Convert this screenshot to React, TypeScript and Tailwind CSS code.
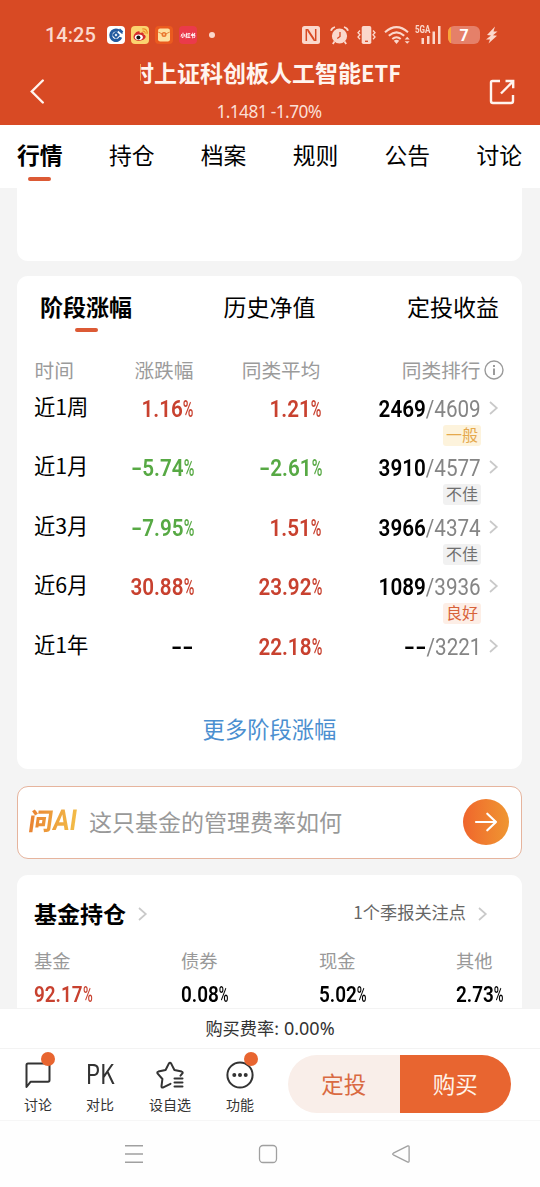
import React from 'react';

// Type for one line of the period performance table
type PeriodRow = {
  label: string;
  change: string;
  average: string;
  rank: string;
  total: string;
  tag?: { text: string; className: string };
};

const tabs = ['行情', '持仓', '档案', '规则', '公告', '讨论'];

const greyTag = 'bg-[#f1f1f1] text-[#6f6f6f]';

const rows: PeriodRow[] = [
  { label: '近1周', change: '1.16%', average: '1.21%', rank: '2469', total: '4609', tag: { text: '一般', className: 'bg-[#fdf3dc] text-[#e5a94c]' } },
  { label: '近1月', change: '-5.74%', average: '-2.61%', rank: '3910', total: '4577', tag: { text: '不佳', className: greyTag } },
  { label: '近3月', change: '-7.95%', average: '1.51%', rank: '3966', total: '4374', tag: { text: '不佳', className: greyTag } },
  { label: '近6月', change: '30.88%', average: '23.92%', rank: '1089', total: '3936', tag: { text: '良好', className: 'bg-[#fdeee6] text-[#d8623a]' } },
  { label: '近1年', change: '--', average: '22.18%', rank: '--', total: '3221' },
];

const holdings = [
  { label: '基金', value: '92.17%', width: 'w-[147px]', color: 'text-[#c8412f]' },
  { label: '债券', value: '0.08%', width: 'w-[138px]', color: 'text-black' },
  { label: '现金', value: '5.02%', width: 'w-[137px]', color: 'text-black' },
  { label: '其他', value: '2.73%', width: 'w-[60px]', color: 'text-black' },
];

const valueColor = (value: string) => {
  if (value === '--') return 'text-black';
  return value.startsWith('-') ? 'text-[#57a944]' : 'text-[#c8412f]';
};

// Digits keep their width, leading dashes are stretched to a full figure
const Digits = ({ value }: { value: string }) => {
  const dashes = value.match(/^-+/)?.[0] ?? '';
  return (
    <>
      {dashes && <span className="inline-block origin-right scale-x-[1.5]">{dashes}</span>}
      {value.slice(dashes.length)}
    </>
  );
};

// Condensed figure, the percent sign is drawn narrower than the digits
const Figure = ({ value, className }: { value: string; className: string }) => {
  const isPercent = value.endsWith('%');
  return (
    <span className={`inline-block scale-x-[.86] whitespace-nowrap font-['Roboto',sans-serif] font-semibold ${className}`}>
      <Digits value={isPercent ? value.slice(0, -1) : value} />
      {isPercent && <span className="-mr-[5px] inline-block origin-left scale-x-[.7] font-medium">%</span>}
    </span>
  );
};

const Chevron = () => (
  <svg width="10" height="14" viewBox="0 0 10 14" fill="none" stroke="#c9c9c9" strokeWidth="1.7">
    <path d="M1 1 7.8 7 1 13" />
  </svg>
);

const StatusBar = () => (
  <div className="flex h-[18px] items-center text-[#fbd8cc]">
    <span className="ml-[45px] w-[62px] font-['Roboto',sans-serif] text-[20px] font-medium leading-[18px]">14:25</span>
    <div className="flex gap-[6px]">
      <svg width="18" height="18" viewBox="0 0 18 18">
        <rect width="18" height="18" rx="4" fill="#fff" />
        <path d="M11.2 4.6A5.2 5.2 0 1 0 13.8 11.2" fill="none" stroke="#245b9f" strokeWidth="3" />
        <path d="M9 5 13 9 9 13 5 9Z" fill="#245b9f" />
        <path d="M7.6 9 9 7.6 10.4 9 9 10.4Z" fill="#fff" />
        <path d="M10.5 3.2 15.5 7.5M12.5 3 15.8 6" stroke="#245b9f" strokeWidth="1.5" />
      </svg>
      <svg width="18" height="18" viewBox="0 0 18 18">
        <rect width="18" height="18" rx="4" fill="#fbd470" />
        <path d="M2.5 11.3C2.5 8 6 4.8 8 5.2c1 .2.8 1.4.7 1.8 1.8-.8 4.6-.8 3.9 1.4 2 .5 2.6 2 1.6 3.6-2.2 3.8-11.7 3.7-11.7-.7Z" fill="#d52b2a" />
        <ellipse cx="7.8" cy="11.2" rx="4" ry="2.8" fill="#fff" />
        <circle cx="7.4" cy="11.4" r="2" fill="#151515" />
        <path d="M11.5 5.2C13.2 4.8 14.4 6 14.2 7.6M11.2 3C14.5 2.2 16.8 4.8 16 8" fill="none" stroke="#ef8d28" strokeWidth="1.1" />
      </svg>
      <svg width="18" height="18" viewBox="0 0 18 18">
        <rect width="18" height="18" rx="4" fill="#ea5a1f" />
        <rect x="3" y="2.5" width="12" height="13" rx="2.2" fill="#fde0a0" />
        <path d="M3.2 6 9 8.8 14.8 6" fill="none" stroke="#e8863a" strokeWidth="1" />
        <circle cx="9" cy="8.5" r="2.5" fill="#e9752c" />
        <path d="M9 7.2V9.8M8 8.3H10" stroke="#fde0a0" strokeWidth=".7" />
      </svg>
      <span className="flex h-[18px] w-[18px] items-center justify-center rounded bg-[#ea3a4b]">
        <span className="scale-[.5] whitespace-nowrap text-[10px] font-black leading-none text-white">小红书</span>
      </span>
    </div>
    <span className="ml-[12px] h-[6px] w-[6px] rounded-full bg-[#fbd8cc]" />

    <svg className="ml-[87px]" width="18" height="18" viewBox="0 0 18 18">
      <rect width="18" height="18" rx="2.5" fill="currentColor" />
      <path d="M4.3 15V3.8H5.8L12 13.2M13.7 3V14.2H12.2L6 4.8" fill="none" stroke="#d84a24" strokeWidth="1.5" />
    </svg>
    <svg className="ml-[10px]" width="19" height="19" viewBox="0 0 19 19" fill="none" stroke="currentColor">
      <circle cx="9.5" cy="10" r="7.6" fill="currentColor" stroke="none" />
      <path d="M1 4.8Q1.8 1.8 5 1M18 4.8Q17.2 1.8 14 1M4.5 15.5 2.8 18M14.5 15.5 16.2 18" strokeWidth="1.8" />
      <path d="M10 6V10.5L7.3 12.5" stroke="#d84a24" strokeWidth="1.3" />
    </svg>
    <svg className="ml-[8px]" width="19" height="18" viewBox="0 0 19 18" fill="none" stroke="currentColor" strokeWidth="1.3">
      <rect x="4.7" y="0" width="9.6" height="18" rx="1.8" fill="currentColor" stroke="none" />
      <path d="M8 15.3H11" stroke="#d84a24" />
      <path d="M3 4.5 1 6.7 3 8.8 1 11 3 13.2M16 4.5 18 6.7 16 8.8 18 11 16 13.2" />
    </svg>
    <svg className="ml-[8px]" width="26" height="18" viewBox="0 0 26 18" fill="none" stroke="currentColor" strokeWidth="2">
      <path d="M1 6.2Q12.5-4 24 6.2M4.8 9.8Q12.5 3 20.2 9.8M8.3 13Q12.5 9.4 16.7 13" />
      <path d="M9.8 14.7Q12.5 12.6 15.2 14.7L12.5 18Z" fill="currentColor" stroke="none" />
      <path d="M20.7 13.4 23.2 10.8 25.7 13.4ZM20.7 15.2 23.2 17.8 25.7 15.2Z" fill="currentColor" stroke="none" />
    </svg>
    <div className="relative ml-[6px] h-[18px] w-[25px]">
      <svg width="25" height="18" viewBox="0 0 25 18" fill="currentColor">
        <path d="M5.5 12H8V18H5.5ZM11 10H13.5V18H11ZM16.5 5.5H19V18H16.5ZM22 0H24.5V18H22Z" />
      </svg>
      <span className="absolute -left-[1px] -top-[1px] origin-left scale-x-[.8] font-['Roboto',sans-serif] text-[10px] font-bold leading-[10px]">5GA</span>
    </div>
    <div className="ml-[7px] flex h-[18px] w-[32px] overflow-hidden rounded-[6px] bg-[#e58069]">
      <span className="w-[3px] bg-[#f9a63a]" />
      <span className="flex-1 pr-[3px] text-center font-['Roboto',sans-serif] text-[16px] font-bold leading-[19px] text-white">7</span>
    </div>
    <svg className="ml-[6px]" width="12" height="18" viewBox="0 0 12 18" fill="currentColor">
      <path d="M9 .5 1 9 5 9.5 0 13.5 4 13.5 2.5 17.5 11 9.8 7 9.2 11.5 5.5 7.5 5.5Z" />
    </svg>
  </div>
);

const Header = () => (
  <header className="h-[125px] bg-[#d84a24] pt-[26px]">
    <StatusBar />
    <div className="mt-[14px] flex h-[67px] text-[#fff4ee]">
      <div className="w-[140px] pl-[30px] pt-[21px]">
        <svg width="15" height="25" viewBox="0 0 15 25" fill="none" stroke="currentColor" strokeWidth="2.4" strokeLinecap="round">
          <path d="M12.8 1.5 1.8 12.5 12.8 23.5" />
        </svg>
      </div>
      <div className="w-[260px]">
        {/* marquee title, scrolled under the left edge */}
        <div className="flex h-[31px] overflow-hidden">
          <h1 className="-ml-[32px] whitespace-nowrap text-[23px] font-bold leading-[29px]">
            博时上证科创板人工智能<span className="text-[22px]">ETF</span>
          </h1>
        </div>
        <p className="mt-[11px] pr-[2px] text-center font-['Noto_Sans',sans-serif] text-[17.3px] leading-[23px] tracking-[-.6px] text-[#fbdfd5]">1.1481 -1.70%</p>
      </div>
      <div className="pl-[89px] pt-[21px]">
        <svg width="26" height="26" viewBox="0 0 26 26" fill="none" stroke="currentColor" strokeWidth="2.4">
          <path d="M11 2H3.5Q2 2 2 3.5V22Q2 24 4 24H22Q24 24 24 22V16" />
          <path d="M12 14.5 24 2.3" />
          <path d="M16.5 2H24.2V9.2" />
        </svg>
      </div>
    </div>
  </header>
);

const Tabs = () => (
  <nav className="flex h-[63px] justify-between bg-white pl-[17px] pr-[18px]">
    {tabs.map((tab, i) => (
      <div key={tab} className="flex flex-col items-center">
        <span className={`h-[52px] whitespace-nowrap text-[22.8px] leading-[60px] ${i === 0 ? 'font-bold' : ''}`}>{tab}</span>
        {i === 0 && <span className="h-[4px] w-[23px] rounded-full bg-[#dc5a35]" />}
      </div>
    ))}
  </nav>
);

const Performance = () => (
  <section className="mt-[15px] h-[493px] rounded-[11px] bg-white">
    <div className="flex h-[72px] justify-between pl-[23px] pr-[23px] text-[23px] leading-[60px]">
      <div className="flex flex-col items-center">
        <span className="h-[52px] font-bold">阶段涨幅</span>
        <span className="h-[4px] w-[23px] rounded-full bg-[#dc5a35]" />
      </div>
      <span>历史净值</span>
      <span>定投收益</span>
    </div>
    <div className="grid h-[44px] grid-cols-[60px_99px_127px_160px_26px] items-center pl-[17.5px] text-[19.7px] leading-[44px] text-[#9b9b9b]">
      <span>时间</span>
      <span className="text-right">涨跌幅</span>
      <span className="text-right">同类平均</span>
      <span className="text-right">同类排行</span>
      <svg className="ml-[3px]" width="20" height="20" viewBox="0 0 20 20" fill="none" stroke="currentColor">
        <circle cx="10" cy="10" r="9" strokeWidth="1.4" />
        <path d="M10 8.5V15M10 5V7" strokeWidth="2" />
      </svg>
    </div>
    {rows.map(row => (
      <div key={row.label} className="h-[59.4px] pl-[17px]">
        <div className="grid h-[33px] grid-cols-[60px_100px_128px_159px_26px] items-start text-[24px] leading-[29px]">
          <span className="whitespace-nowrap text-[21.3px] leading-[28px]">{row.label}</span>
          <span className="text-right"><Figure value={row.change} className={`origin-right ${valueColor(row.change)}`} /></span>
          <span className="text-right"><Figure value={row.average} className={`origin-right ${valueColor(row.average)}`} /></span>
          <span className="text-right">
            <span className="inline-block origin-right scale-x-[.86] whitespace-nowrap font-['Roboto',sans-serif] font-semibold">
              <Digits value={row.rank} /><span className="font-normal text-[#858585]">/{row.total}</span>
            </span>
          </span>
          <span className="flex h-[32px] items-center pl-[7.5px]"><Chevron /></span>
        </div>
        {row.tag && (
          <div className="flex w-[447px] justify-end">
            <span className={`h-[21px] w-[38px] rounded-[3px] text-center text-[16px] leading-[19px] ${row.tag.className}`}>{row.tag.text}</span>
          </div>
        )}
      </div>
    ))}
    <p className="mt-[23px] text-center text-[22.3px] leading-[32px] text-[#4b8fd0]">更多阶段涨幅</p>
  </section>
);

const AskAi = () => (
  <section className="mt-[17px] flex h-[73px] items-center rounded-[11px] border border-[#e6b49d] bg-white pb-[2px] pl-[11px] pr-[12px]">
    <div className="flex w-[60px] -skew-x-[8deg] items-center pb-[3px]">
      <span className="bg-gradient-to-r from-[#e98232] to-[#eda03d] bg-clip-text text-[24px] font-black leading-[34px] text-transparent">问</span>
      <span className="origin-left scale-x-[.86] bg-gradient-to-r from-[#eda03d] to-[#f3bd48] bg-clip-text font-['Roboto',sans-serif] text-[29px] font-bold leading-[34px] text-transparent">AI</span>
    </div>
    <span className="flex-1 pb-[2px] text-[23px] leading-[34px] text-[#999]">这只基金的管理费率如何</span>
    <span className="flex h-[46px] w-[46px] items-center justify-center rounded-full bg-gradient-to-r from-[#ef652c] to-[#ef9632]">
      <svg width="24" height="20" viewBox="0 0 24 20" fill="none" stroke="#fff" strokeWidth="2.2" strokeLinecap="round" strokeLinejoin="round">
        <path d="M2 10H22M13.3 1.7 22 10 13.3 18.3" />
      </svg>
    </span>
  </section>
);

const Holdings = () => (
  <section className="mt-[16px] h-[133px] rounded-t-[11px] bg-white pl-[17px]">
    <div className="flex h-[73px] items-center pr-[34px] pt-[5px]">
      <h2 className="mr-[12px] pb-[2px] text-[23px] font-bold leading-[34px]">基金持仓</h2>
      <Chevron />
      <span className="ml-auto mr-[12px] pb-[4px] text-[17.2px] text-[#666]">1个季报关注点</span>
      <Chevron />
    </div>
    <div className="flex">
      {holdings.map(item => (
        <div key={item.label} className={item.width}>
          <p className="text-[18.3px] leading-[24px] text-[#999]">{item.label}</p>
          <p className="mt-[4px] text-[22px] leading-[32px]"><Figure value={item.value} className={`origin-left ${item.color}`} /></p>
        </div>
      ))}
    </div>
  </section>
);

const RedDot = ({ className }: { className: string }) => (
  <span className={`absolute h-[14px] w-[14px] rounded-full bg-[#e86530] ${className}`} />
);

const BottomBar = () => (
  <footer className="bg-white text-[#333]">
    <p className="flex h-[40px] justify-center border-t border-[#f3f3f3] text-[17.2px] leading-[38px]">
      <span className="mr-[5px]">购买费率:</span>
      <span className="font-['Noto_Sans',sans-serif] text-[18px]">0.00%</span>
    </p>
    <div className="flex h-[72px] border-t border-[#f3f3f3] pl-[7px] text-[14px]">
      <div className="flex w-[62px] flex-col items-center">
        <div className="relative flex h-[46px] items-center pt-[6px]">
          <svg width="26" height="28" viewBox="0 0 26 28" fill="none" stroke="currentColor" strokeWidth="2" strokeLinejoin="round">
            <path d="M1.5 26V4Q1.5 2.5 3 2.5H23Q24.5 2.5 24.5 4V19Q24.5 20.8 23 20.8H5.5Z" />
          </svg>
          <RedDot className="-right-[4px] top-[3px]" />
        </div>
        <span className="leading-[18px]">讨论</span>
      </div>
      <div className="flex w-[62px] flex-col items-center">
        <span className="h-[46px] scale-x-[.84] text-[27px] leading-[48px]">PK</span>
        <span className="leading-[18px]">对比</span>
      </div>
      <div className="flex w-[78px] flex-col items-center">
        <div className="flex h-[46px] items-center pt-[6px]">
          <svg width="28" height="28" viewBox="0 0 28 28" fill="none" stroke="currentColor" strokeWidth="2" strokeLinejoin="round" strokeLinecap="round">
            <path d="M14.5 22.8 6.8 26.6Q5.4 26.8 5.5 25.2L6.4 18 1.5 12.4Q.9 11 2.3 10.6L9.6 9 12.8 2.6Q14 1 15.2 2.6L18.4 9 25.7 10.6Q27.2 11 26.4 12.4L24.5 14.7" />
            <path d="M18.5 17.5H26.5M18.5 21.5H26.5M18.5 25.5H26.5" />
          </svg>
        </div>
        <span className="leading-[18px]">设自选</span>
      </div>
      <div className="flex w-[62px] flex-col items-center">
        <div className="relative flex h-[46px] items-center pt-[6px]">
          <svg width="28" height="28" viewBox="0 0 28 28" fill="none" stroke="currentColor" strokeWidth="2">
            <circle cx="14" cy="14" r="12.6" />
            <path d="M8.3 14H8.31M14 14H14.01M19.7 14H19.71" strokeWidth="4" strokeLinecap="round" />
          </svg>
          <RedDot className="-right-[3.5px] top-[3px]" />
        </div>
        <span className="leading-[18px]">功能</span>
      </div>
      <div className="ml-[17px] mt-[6px] flex h-[58px] w-[223px] overflow-hidden rounded-full text-center text-[22.5px] leading-[56px]">
        <span className="flex-1 bg-[#f9eee9] text-[#d96a42]">定投</span>
        <span className="flex-1 bg-[#e86530] text-[#fff3e8]">购买</span>
      </div>
    </div>
  </footer>
);

const SystemNav = () => (
  <div className="flex h-[67px] gap-[113.5px] border-t border-[#f6f6f6] bg-[#fefefe] pl-[124px] pt-[23px]">
    <svg width="20" height="20" viewBox="0 0 20 20" fill="none" stroke="#a0a0a0" strokeWidth="1.5">
      <path d="M1 1.8H19M1 10H19M1 18.2H19" />
    </svg>
    <svg width="20" height="20" viewBox="0 0 20 20" fill="none" stroke="#a0a0a0" strokeWidth="1.3">
      <rect x="1.5" y="1.5" width="17" height="17" rx="3.5" />
    </svg>
    <svg width="20" height="20" viewBox="0 0 20 20" fill="none" stroke="#a0a0a0" strokeWidth="1.3" strokeLinejoin="round">
      <path d="M16.8 1.9 2.3 9.2Q1 10 2.3 10.8L16.8 18.1Q18.1 18.4 18.1 17V3Q18.1 1.6 16.8 1.9Z" />
    </svg>
  </div>
);

const App = () => (
  <div className="flex h-[1187px] w-[540px] flex-col overflow-hidden bg-[#f4f4f4] font-['Noto_Sans_CJK_SC',sans-serif] text-black">
    <Header />
    <Tabs />
    <main className="h-[820px] overflow-hidden pl-[17px] pr-[18px]">
      <div className="h-[73px] rounded-b-[11px] bg-white" />
      <Performance />
      <AskAi />
      <Holdings />
    </main>
    <BottomBar />
    <SystemNav />
  </div>
);

export default App;
